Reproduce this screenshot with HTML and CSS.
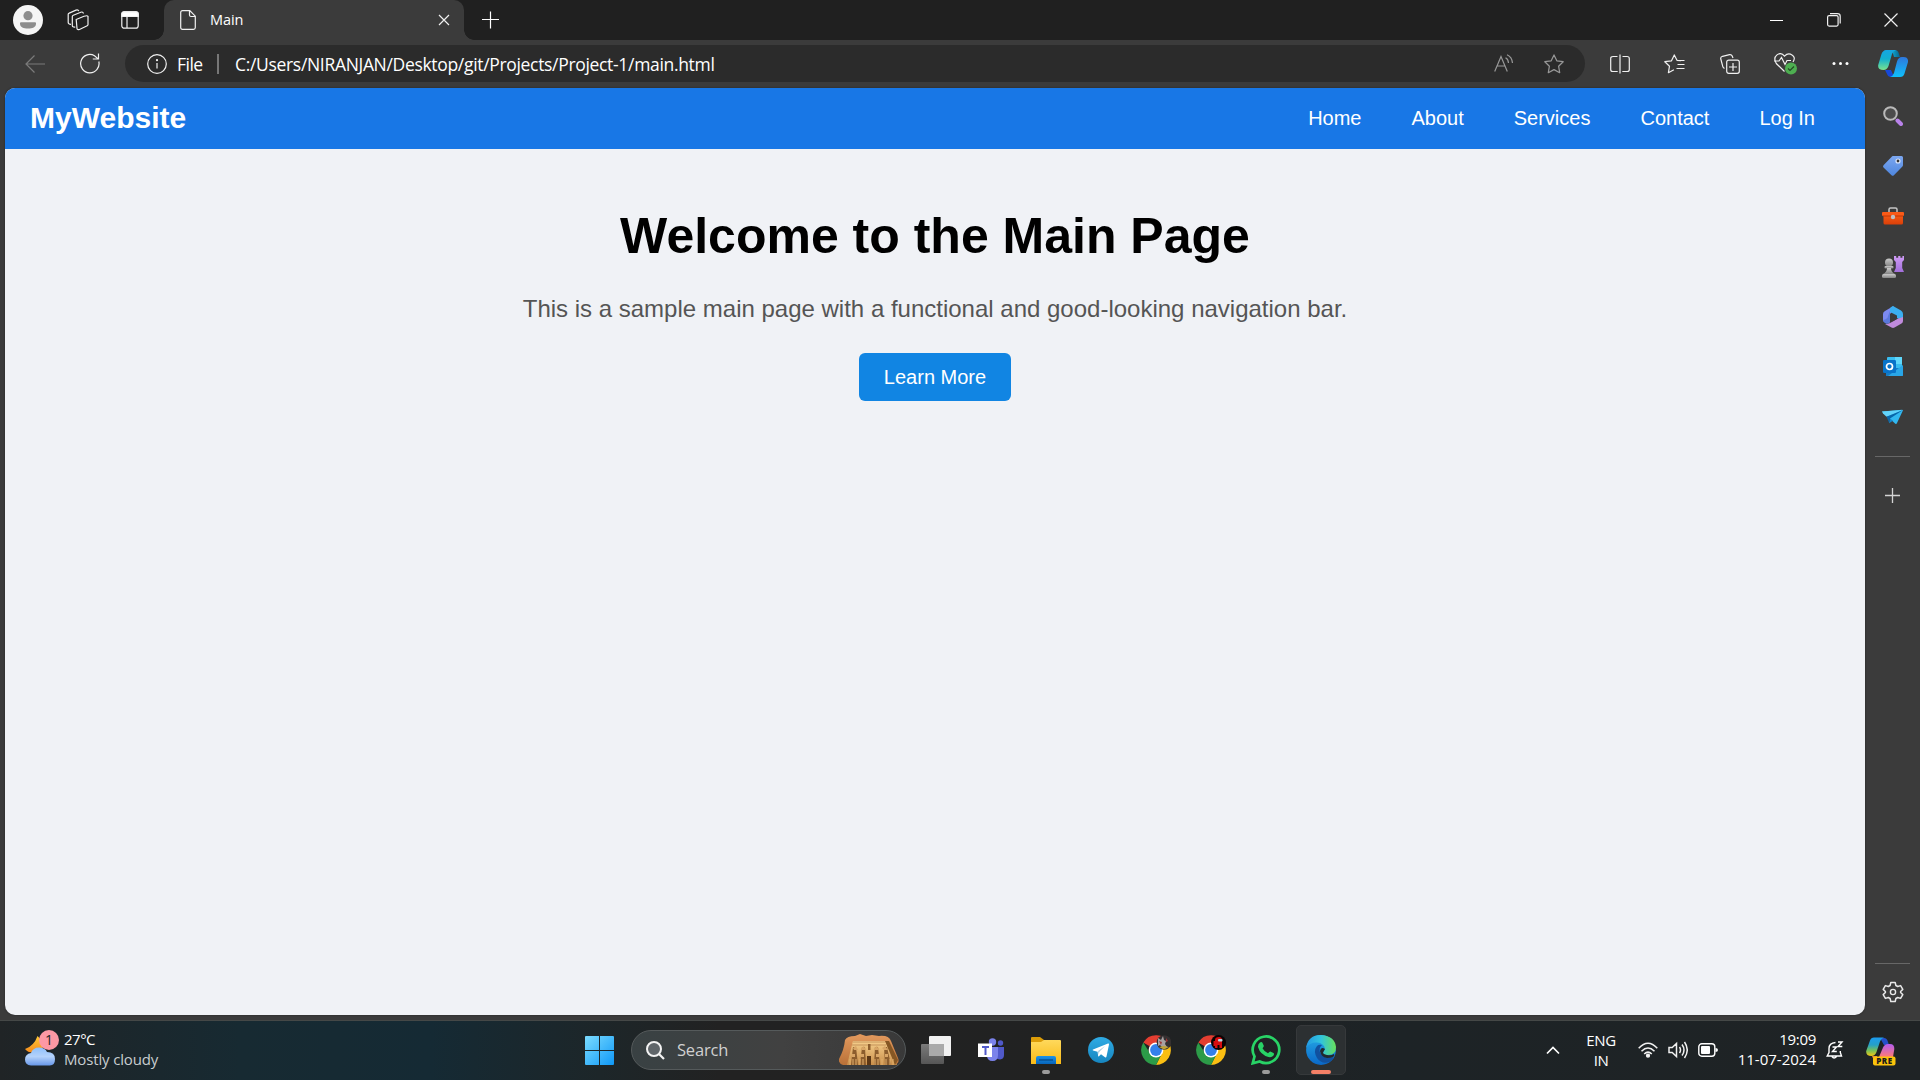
FILE: index.html
```html
<!DOCTYPE html>
<html lang="en">
<head>
<meta charset="utf-8">
<title>Main</title>
<link rel="stylesheet" href="styles.css">
</head>
<body>
<svg class="defs" aria-hidden="true">
  <defs>
    <linearGradient id="gCyan" x1="0" y1="0" x2="0" y2="1"><stop offset="0" stop-color="#16a5e2"/><stop offset=".45" stop-color="#12b0cf"/><stop offset="1" stop-color="#7be48c"/></linearGradient>
    <linearGradient id="gBlue" x1="0" y1="0" x2="0" y2="1"><stop offset="0" stop-color="#2e77dc"/><stop offset="1" stop-color="#0fc0fb"/></linearGradient>
    <linearGradient id="gTeal" x1="0" y1="0" x2="1" y2="0"><stop offset="0" stop-color="#0fa5cd"/><stop offset="1" stop-color="#07648f"/></linearGradient>
    <linearGradient id="gRain" x1="0" y1="0" x2="0" y2="1"><stop offset="0" stop-color="#1b9cf0"/><stop offset=".4" stop-color="#26a0c8"/><stop offset=".7" stop-color="#74c05a"/><stop offset="1" stop-color="#f2c811"/></linearGradient>
    <linearGradient id="gPink" x1="0" y1="0" x2="0" y2="1"><stop offset="0" stop-color="#b35cf0"/><stop offset="1" stop-color="#ff7a75"/></linearGradient>
    <linearGradient id="gTag" x1="0" y1="0" x2="0" y2="1"><stop offset="0" stop-color="#7ca7f0"/><stop offset="1" stop-color="#4e86de"/></linearGradient>
    <linearGradient id="gGrey" x1="0" y1="0" x2="0" y2="1"><stop offset="0" stop-color="#c9c9c9"/><stop offset="1" stop-color="#848484"/></linearGradient>
    <linearGradient id="gPurple" x1="0" y1="0" x2="0" y2="1"><stop offset="0" stop-color="#cf9bf5"/><stop offset="1" stop-color="#a26fdb"/></linearGradient>
    <linearGradient id="gBox" x1="0" y1="0" x2="0" y2="1"><stop offset="0" stop-color="#f9641c"/><stop offset="1" stop-color="#db3f08"/></linearGradient>
    <linearGradient id="gWin" x1="0" y1="0" x2="1" y2="1"><stop offset="0" stop-color="#7bdcff"/><stop offset="1" stop-color="#0f98f7"/></linearGradient>
    <linearGradient id="gFolder" x1="0" y1="0" x2="0" y2="1"><stop offset="0" stop-color="#ffd95c"/><stop offset="1" stop-color="#f9ba16"/></linearGradient>
    <linearGradient id="gCloud" x1="0" y1="0" x2="0" y2="1"><stop offset="0" stop-color="#8fc0fb"/><stop offset=".5" stop-color="#b4d2fb"/><stop offset="1" stop-color="#6797e8"/></linearGradient>
    <linearGradient id="gMoon" x1="0" y1="0" x2="0" y2="1"><stop offset="0" stop-color="#ffca36"/><stop offset="1" stop-color="#f48a1c"/></linearGradient>
    <linearGradient id="gTele" x1="0" y1="0" x2="0" y2="1"><stop offset="0" stop-color="#2fabe4"/><stop offset="1" stop-color="#1786c0"/></linearGradient>
    <linearGradient id="gEdge" x1="0" y1="0" x2="1" y2="0"><stop offset="0" stop-color="#2398e4"/><stop offset=".5" stop-color="#31c4dc"/><stop offset="1" stop-color="#68e05a"/></linearGradient>
    <linearGradient id="gEdge2" x1="0" y1="0" x2="0" y2="1"><stop offset="0" stop-color="#26a9e6"/><stop offset="1" stop-color="#0a68c8"/></linearGradient>
    <linearGradient id="gSand" x1="0" y1="0" x2="0" y2="1"><stop offset="0" stop-color="#e39a5e"/><stop offset="1" stop-color="#b97138"/></linearGradient>
    <linearGradient id="gFace" x1="0" y1="0" x2="0" y2="1"><stop offset="0" stop-color="#f6cf8c"/><stop offset="1" stop-color="#c98f4b"/></linearGradient>
    <linearGradient id="gBar" x1="0" y1="0" x2="0" y2="1"><stop offset="0" stop-color="#1d93e8"/><stop offset="1" stop-color="#0664ba"/></linearGradient>
    <linearGradient id="gView" x1="0" y1="0" x2="0" y2="1"><stop offset="0" stop-color="#7b7b7b"/><stop offset="1" stop-color="#565656"/></linearGradient>
    <symbol id="chrome" viewBox="0 0 30 30">
      <path d="M15 15 2.3 7.5A14.8 14.8 0 0 1 28.2 8.3H15z" fill="#e43e31"/>
      <path d="M15 8.3H28.2A14.8 14.8 0 0 1 15 29.9L21 18z" fill="#fbbf12"/>
      <path d="M2.3 7.5 9.2 18.5 21 18.3 15 29.9A14.8 14.8 0 0 1 2.3 7.5z" fill="#2c9b48"/>
      <circle cx="15" cy="15" r="7.4" fill="#fff"/><circle cx="15" cy="15" r="5.9" fill="#3480ea"/>
    </symbol>
  </defs>
</svg>

<header class="titlebar">
  <div class="title-tools">
    <svg width="30" height="30" viewBox="0 0 30 30"><circle cx="15" cy="15" r="15" fill="#f5f5f5"/><circle cx="15" cy="10.700" r="4.600" fill="#8d8d8d"/><path d="M8 17.300h14a1 1 0 0 1 1 1v.5c0 3.500-3.500 4.800-8 4.800s-8-1.300-8-4.800v-.5a1 1 0 0 1 1-1z" fill="#8d8d8d"/></svg>
    <svg class="workspaces-icon line" width="22" height="22" viewBox="0 0 22 22"><path d="M9.200 10.500 17 7.300q3.300-1 4 0v8.300q0 .8-.8 1.200l-7.700 3.700q-2.300.6-2.500-1z"/><path d="M8.300 18q-3 .4-3-1.500V7.500q0-.8 1-1.200l7.500-3.100q2.200-.7 2.700 1.300"/><path d="M4 15.300q-2.800 0-2.800-1.800V5.300q0-.8 1-1.200L9 1.100q2.200-.7 2.800 1"/></svg>
    <svg width="18" height="18" viewBox="0 0 18 18" class="line"><rect x=".8" y=".8" width="16.400" height="16.400" rx="2.500"/><path d="M6 5v12"/><path d="M.8 5.500V3q0-2.200 2.200-2.200h12Q17.200.8 17.200 3v2.500z" fill="#fff"/></svg>
  </div>
  <div class="tab">
    <svg width="16" height="20" viewBox="0 0 16 20" class="line"><path d="M2.500.7h7.300l5.500 5.500v11.300q0 1.800-1.800 1.800h-11Q.7 19.300.7 17.500v-15Q.7.700 2.500.700zM9.500.8V5q0 1.500 1.500 1.500h4.200"/></svg>
    <span class="tab-name">Main</span>
    <svg width="12" height="12" viewBox="0 0 12 12" class="line"><path d="M1 1l10 10M11 1 1 11"/></svg>
  </div>
  <svg class="new-tab" width="18" height="18" viewBox="0 0 18 18"><path d="M8.500 .5v17M0 8.500h17" stroke="#fff" stroke-width="1.200"/></svg>
  <div class="window-controls">
    <svg width="14" height="14" viewBox="0 0 14 14"><path d="M0 7.500h13" stroke="#fff"/></svg>
    <svg width="14" height="14" viewBox="0 0 14 14" class="line"><rect x=".6" y="2.600" width="10.500" height="10.500" rx="1.500"/><path d="M3 .6h7.500q2.700 0 2.700 2.700V10.500"/></svg>
    <svg width="14" height="14" viewBox="0 0 14 14" class="line"><path d="M.5.5l13 13M13.500.5l-13 13"/></svg>
  </div>
</header>

<div class="toolbar">
  <div class="nav-tools">
    <svg width="20" height="18" viewBox="0 0 20 18" class="line dim"><path d="M9.500.5 1 9l8.500 8.500M1 9h19"/></svg>
    <svg width="20" height="21" viewBox="0 0 20 21" class="line"><path d="M18.800 8.500A9.200 9.200 0 1 1 14.500 2.700l3.700 3.200M18.500.5V6h-5.700"/></svg>
  </div>
  <div class="address">
    <svg width="20" height="20" viewBox="0 0 20 20" class="line"><circle cx="10" cy="10" r="9.300"/><path d="M10 9v5.500"/><circle cx="10" cy="6.200" r=".5" fill="#fff"/></svg>
    <span class="scheme">File</span>
    <span class="divider"></span>
    <span class="url">C:/Users/NIRANJAN/Desktop/git/Projects/Project-1/main.html</span>
    <div class="address-tools">
      <svg width="20" height="19" viewBox="0 0 20 19" class="line dim2"><path d="M.7 17.500 7 2.500l6.300 15M3.200 12h7.700M11.500 3.800Q14.200 5 14.500 9M13 .8Q18 3 18.500 9" /></svg>
      <svg width="20" height="20" viewBox="0 0 20 20" class="line dim2"><path d="M10 .9l2.800 5.900 6.400.9-4.600 4.500 1.100 6.500L10 15.600l-5.700 3.100 1.100-6.500L.8 7.700l6.400-.9z" stroke-linejoin="round"/></svg>
    </div>
  </div>
  <div class="tool-icons">
    <svg width="20" height="20" viewBox="0 0 20 20" class="line"><path d="M7.500 2.500H3Q.7 2.500.7 4.500v11q0 2 2 2h5M12.500 2.500H17q2.300 0 2.300 2v11q0 2-2 2h-5M10 .5v19"/></svg>
    <svg width="21" height="20" viewBox="0 0 21 20" class="line"><path d="M17 6.700 13 6.300 10.300.9 7.500 6.800l-6.700.9 4.700 4.500-1.100 6.500 5.500-3M13.500 10.500h7M13.500 6.500h7M12.500 14.500h8" stroke-linejoin="round"/></svg>
    <svg width="20" height="20" viewBox="0 0 20 20" class="line"><rect x="6.700" y="6.200" width="12.600" height="13.100" rx="2"/><path d="M13 9v8M9 13h8M4.500 14.300Q3 14 2.800 12.500L.8 5Q.3 3 2.500 2.300l7-1.600q2-.3 2.700 1.300l.8 2"/></svg>
    <svg width="23" height="22" viewBox="0 0 23 22" class="line"><path d="M10.500 18.500 2.300 10.500Q-1 5 3 1.900T10.500 3.200Q14-.5 18 1.900T19 9M0 8h5l2.500-3.500 3.500 7 2-4h4"/><circle cx="17" cy="15.500" r="6" fill="#4eaf51" stroke="none"/><path d="M14 15.500l2 2 4-4" stroke="#234b24"/></svg>
    <svg width="17" height="5" viewBox="0 0 17 5"><g fill="#fff"><circle cx="2" cy="2.500" r="1.500"/><circle cx="8.500" cy="2.500" r="1.500"/><circle cx="15" cy="2.500" r="1.500"/></g></svg>
  </div>
  <svg class="copilot" width="30" height="27" viewBox="0 0 30 27"><path d="M14 0h3q3 0 4 4l1 3h-6z" fill="url(#gTeal)"/><path d="M7 20h6l3 7h-3q-3 0-4-3z" fill="#1748d8"/><path d="M8 0h10q-3 1-4 4l-3.500 12q-1.500 4-5 4Q-.5 20 .2 15L3.500 4Q5 .3 8 0z" fill="url(#gCyan)"/><path d="M22 27H12q3-1 4-4l3-11.500q1.300-4.500 5-4.500h1.500Q30.500 7 30 12l-3.500 11.500q-1 3.500-4.500 3.500z" fill="url(#gBlue)"/></svg>
</div>

<div class="workspace">
  <main class="page">
    <nav class="site-nav">
      <a class="brand">MyWebsite</a>
      <ul class="links"><li>Home</li><li>About</li><li>Services</li><li>Contact</li><li>Log In</li></ul>
    </nav>
    <section class="hero">
      <h1>Welcome to the Main Page</h1>
      <p>This is a sample main page with a functional and good-looking navigation bar.</p>
      <a class="cta">Learn More</a>
    </section>
  </main>
  <aside class="sidebar">
    <div class="side-apps">
      <svg width="20" height="20" viewBox="0 0 20 20"><circle cx="7.500" cy="7.500" r="6.300" fill="#4b4b4b" stroke="#b9b9b9" stroke-width="2"/><path d="M14.500 14.500l3.500 3.500" stroke="#b982ea" stroke-width="4" stroke-linecap="round"/></svg>
      <svg width="22" height="22" viewBox="0 0 22 22"><path d="M11 1h8.500Q21 1 21 2.500V10q0 1-.8 1.800l-8.300 8.500q-1.200 1-2.400 0l-8-7.700q-1-1.200 0-2.300l8-8.300Q10 1 11 1z" fill="url(#gTag)"/><circle cx="16" cy="6" r="2" fill="#353535" stroke="#dce7fb" stroke-width="1.200"/></svg>
      <svg width="22" height="18" viewBox="0 0 22 18"><path d="M7 5V2.500Q7 1 8.500 1h5Q15 1 15 2.500V5" fill="none" stroke="#c5c5c5" stroke-width="1.500"/><rect x="1.500" y="5" width="19.500" height="12.500" rx="1.500" fill="url(#gBox)"/><rect x="0" y="5" width="22" height="4" rx="1" fill="#fa5a17"/><path d="M1 9h20" stroke="#bf3607"/><circle cx="11" cy="10" r="2.200" fill="#bfc0c3"/></svg>
      <svg width="22" height="22" viewBox="0 0 22 22"><path d="M12 0h2.200v1.700h2V0h2.200v1.700h2V0H22v4l-1.800 2v6l1.800 4H12l1.800-4V6L12 4z" fill="url(#gPurple)"/><g fill="url(#gGrey)"><circle cx="7" cy="6.500" r="4"/><rect x="2.500" y="10" width="9" height="2.500" rx="1"/><path d="M5 12h4q0 4 4 6H1q4-2 4-6z"/><rect y="18" width="14" height="4" rx="1.500"/></g></svg>
      <svg width="20" height="22" viewBox="0 0 20 22"><path d="M10.500 0 2 5Q0 6 0 8v7l6.500 3V8.500L9 6z" fill="#7c8af0"/><path d="M10 0l8 4.500q2 1 2 3.500v7l-6-3V9.500L7 6V3q0-2 3-3z" fill="#3baff0"/><path d="M20 11v4q0 1.500-1.500 2.500l-7 4q-1.500.8-3 0L2 18q4 0 6-1.500l6-3.500z" fill="#c08bdc"/><path d="M7 5v11l-3 2-2-1q-2-1-2-3 5-1 5-4z" fill="#5a78dc"/><path d="M8 7.500l6 3V13l-4.500 2.500L8 14z" fill="#3b3b3b"/></svg>
      <svg width="20" height="20" viewBox="0 0 20 20"><rect x="4" width="15" height="14" rx="1" fill="#39bdf0"/><path d="M12 0h7v7h-7z" fill="#5fd7fb"/><path d="M3 19V11h17v8z" fill="#167cc5"/><path d="M5 19 20 8v10q0 1-1 1z" fill="#29a6e7"/><rect y="3" width="13" height="13" rx="1.300" fill="#0873c9"/><circle cx="6.500" cy="9.500" r="3" fill="none" stroke="#fff" stroke-width="1.700"/></svg>
      <svg width="21" height="16" viewBox="0 0 21 16"><path d="M0 2.500 20 .8q1.200 0 .8 1L15 14q-.5 1.300-1.700.8z" fill="#32b7ef"/><path d="M0 2.500 21 1 4.500 7.700 1 4.500z" fill="#62d3fa"/><path d="M4.500 7.700 21 1 8 9.500 7 13.500z" fill="#0865a9"/><path d="M8 9.500l3 2.300-4 2.500z" fill="#1687ce"/></svg>
    </div>
    <hr class="side-rule">
    <svg class="side-add" width="15" height="15" viewBox="0 0 15 15"><path d="M7.500 0v15M0 7.500h15" stroke="#d4d4d4" stroke-width="1.300"/></svg>
    <hr class="side-rule bottom">
    <svg class="gear" width="22" height="22" viewBox="0 0 22 22"><path d="M8.800 1.500h4.400l.7 3 1.800 1 2.900-.9 2.200 3.800L18.600 10.500v1l2.200 2.100-2.200 3.800-2.900-.9-1.800 1-.7 3H8.800l-.7-3-1.800-1-2.900.9-2.200-3.800 2.200-2.100v-1L1.200 8.400l2.200-3.800 2.900.9 1.800-1z" fill="none" stroke="#e8e8e8" stroke-width="1.500" stroke-linejoin="round"/><circle cx="11" cy="11" r="2.600" fill="none" stroke="#e8e8e8" stroke-width="1.400"/></svg>
  </aside>
</div>

<footer class="taskbar">
  <div class="weather">
    <svg width="34" height="36" viewBox="0 0 34 36"><path d="M12.500 6Q9 16 0 19q4 5 11 3 8-2 8-9z" fill="url(#gMoon)"/><path d="M6 35.500Q0 35 0 29.500T6 23Q8 17.500 14 17.500T22 22q8 0 8 7t-6 6.500z" fill="url(#gCloud)"/><circle cx="24" cy="10" r="10" fill="#fd98a4"/><text x="24" y="15" text-anchor="middle" class="badge-text">1</text></svg>
    <div class="weather-text"><span class="temp">27°C</span><span class="sky">Mostly cloudy</span></div>
  </div>
  <svg class="start" width="29" height="29" viewBox="0 0 29 29"><path d="M1 0h13v14H0V1q0-1 1-1zM15 0h13q1 0 1 1v13H15zM0 15h14v14H1q-1 0-1-1zM15 15h14v13q0 1-1 1H15z" fill="url(#gWin)"/></svg>
  <div class="search">
    <svg width="19" height="19" viewBox="0 0 19 19"><circle cx="8" cy="8" r="7" fill="#60666a" stroke="#f3f3f3" stroke-width="2"/><path d="M13 13l5 5" stroke="#f3f3f3" stroke-width="2.200"/></svg>
    <span class="search-label">Search</span>
    <svg class="temple" width="60" height="32" viewBox="0 0 60 32"><path d="M6 6Q8 2 16 2l5-2 6 2 6-1 7 1q10-1 12 5l7 17q2 5-3 7H4q-5-2-4-6 5-9 6-19z" fill="url(#gSand)"/><path d="M14 7h32l12 24H8z" fill="url(#gFace)"/><path d="M46 7h4l9 19-3 5z" fill="#855724"/><path d="M14 8h32M13 11h34" stroke="#c4935a"/><g fill="#8c5d2d"><path d="M14 13h3l2 18h-7z"/><path d="M23 13h3l1 18h-6z"/><path d="M36 13h3l2 18h-6z"/><path d="M45 13h3l4 18h-6z"/><path d="M28 22h4v9h-4z" fill="#5c3715"/><path d="M29 10h2.500v6H29z"/></g><g fill="#d8a566"><path d="M14 14l3-2 2 4h-4zM22 14l3-2 2 4h-4zM35 14l3-2 2 4h-4zM43 14l3-2 3 4h-4zM13 20h3v3h-3zM22 20h3v3h-3zM37 20h3v3h-3zM46 20h3v3h-3z"/></g><path d="M11 25v6M14 25v6M17 25v6M21 25v6M24 25v6M36 25v6M39 25v6M43 25v6M47 25v6M51 25v6M54 25v6" stroke="#e3b16e"/></svg>
  </div>
  <div class="apps">
    <div class="app"><svg width="30" height="30" viewBox="0 0 30 30"><rect x="0" y="9" width="23" height="20" rx="1" fill="url(#gView)"/><rect x="8" y="1" width="22" height="20" rx="1" fill="#f1f1f1"/><path d="M8 9h15v12H8z" fill="#aaa"/></svg></div>
    <div class="app"><svg width="26" height="24" viewBox="0 0 26 24"><circle cx="14.500" cy="4" r="3.700" fill="#7b83eb"/><circle cx="22.500" cy="5" r="2.700" fill="#5059c9"/><path d="M18 9h8v8q0 4-4 4.500-3 0-4-2z" fill="#5059c9"/><path d="M9 9h11v8q0 6-5.500 6T9 17z" fill="#7b83eb"/><path d="M0 5.500h14V19H0z" fill="#fff"/><path d="M4 9h7M7.500 9v8" stroke="#5059c9" stroke-width="2"/></svg></div>
    <div class="app running"><svg width="30" height="27" viewBox="0 0 30 27"><path d="M1 0h8l4 3v6H0V1q0-1 1-1z" fill="#dc9d08"/><path d="M0 5h10l3-2h16q1 0 1 1v23H0z" fill="url(#gFolder)"/><path d="M7 19h16q2 0 2 2v6H5v-6q0-2 2-2z" fill="url(#gBar)"/><path d="M8 23h14" stroke="#064b8c" stroke-width="1.300"/></svg></div>
    <div class="app"><svg width="26" height="26" viewBox="0 0 26 26"><circle cx="13" cy="13" r="13" fill="url(#gTele)"/><path d="M5 12.500 20 6.600q1.200-.3 1 1l-2.500 12q-.4 1.300-1.500.6l-4-3-2 2q-.8.600-.9-.5l-.5-4L5 13.500q-.8-.5 0-1z" fill="#fff"/><path d="M10 14l7-5-5.800 6-.5 3z" fill="#a9cde1"/></svg></div>
    <div class="app"><svg width="30" height="30" viewBox="0 0 30 30"><use href="#chrome"/><circle cx="23" cy="7.500" r="7.300" fill="#343031"/><path d="M17 3l3 2 2-4 1 4 2 1-1 3 2 3-4 1-3-3-2 1z" fill="#a7a1a2"/><path d="M18 6l3 1-1 3zM25 3l2 3-2 1z" fill="#a33433"/><path d="M18 12l5-1 5 1-5 2.500z" fill="#c1a336"/></svg></div>
    <div class="app"><svg width="30" height="30" viewBox="0 0 30 30"><use href="#chrome"/><circle cx="22.500" cy="7.500" r="7.500" fill="#0a0303"/><path d="M19 13V5q0-3 4-3 3 0 3 3v8h-2.500v-3h-2v3zM17.500 6H19v5h-1.500z" fill="#d60d10"/><rect x="22" y="4" width="4.500" height="2.500" rx="1" fill="#b8d7e4"/></svg></div>
    <div class="app running"><svg width="30" height="30" viewBox="0 0 30 30"><path d="M1.700 28.300 3.500 21.500A13.300 13.300 0 1 1 8.700 26.500z" fill="none" stroke="#28d366" stroke-width="2.700"/><path d="M9 7.500q1.300-.8 2.300 0l1.500 3.300q.2.800-1.300 2.400 2 3.800 5.500 5 1.500-1.800 2.300-1.800l3.200 1.600q1 .7 0 2.500-1.700 2.300-5 1.600-8.300-2.300-10.500-10Q6.800 9.300 9 7.500z" fill="#28d366"/></svg></div>
    <div class="app active"><svg width="30" height="30" viewBox="0 0 30 30"><circle cx="15" cy="15" r="14.900" fill="url(#gEdge2)"/><path d="M0 13Q2 0 15 0q14 1 15 12 0 8-8 8-5 0-5-2l2-4q-1-6-8-6.500Q4 7 0 13z" fill="url(#gEdge)"/><path d="M11 11q-4 5 0 12 5 7 13 3.800l3-2.600Q29 22 26 22.300 18 24 14.300 18q-2-5 1.700-8-3-1-5 1z" fill="#11519f"/><path d="M19 14q-4-3-5 2 1 6 7 7 4 0 6-1 2-1 1-3-3 2-7 1-4-1-4-2.500z" fill="#22292c"/></svg></div>
  </div>
  <div class="tray">
    <svg class="chevron" width="14" height="9" viewBox="0 0 14 9"><path d="M1 7.500l6-6 6 6" fill="none" stroke="#fff" stroke-width="1.700"/></svg>
    <div class="lang"><span>ENG</span><span>IN</span></div>
    <div class="status">
      <svg width="20" height="16" viewBox="0 0 20 16" class="line bold"><path d="M.7 6.200Q10-3.700 19.300 6.200M3.500 9.200q6.500-6.500 13 0M6.200 12q3.800-3.700 7.600 0"/><circle cx="10" cy="13.700" r="1.400" fill="#fff"/></svg>
      <svg width="20" height="18" viewBox="0 0 20 18" class="line bold"><path d="M1 6.500h3.200L8.500 2.500v13L4.200 11.500H1zM11.500 6q2 3 0 6M14 3.500q4 5.500 0 11M16.500 1q5.500 8 0 16"/></svg>
      <svg width="20" height="14" viewBox="0 0 20 14"><rect x=".8" y=".8" width="16" height="12.400" rx="3" fill="none" stroke="#fff" stroke-width="1.400"/><rect x="3" y="3" width="9" height="8" rx="1" fill="#fff"/><path d="M17.500 5q2.500 0 2.500 2t-2.500 2z" fill="#fff"/></svg>
    </div>
    <div class="clock"><span>19:09</span><span class="date">11-07-2024</span></div>
    <svg class="bell" width="18" height="18" viewBox="0 0 18 18"><path d="M9.500 1.500Q3 2 3 7.500v4L1.200 15H15.500l-1.200-3.500V10M6 15.500q2 3 4.500 0" fill="none" stroke="#fff" stroke-width="1.400"/><path d="M6.500 6h4l-4 4.500h4.300M12 1h4l-4 4.500h4.300" fill="none" stroke="#fff" stroke-width="1.400"/></svg>
    <svg class="copilot-pre" width="30" height="29" viewBox="0 0 30 29"><path d="M14 1h4q3 0 4 4l1 3h-5z" fill="#254fc9"/><path d="M8 .5h10q-3 1-4 4L10.500 15q-1.500 4-5 4Q-.3 19 .2 14L4 3.500Q5 .5 8 .5z" fill="url(#gRain)"/><path d="M13 20l4-9.500Q18.500 7 22 7h2q4.500 0 4.300 5L27 20z" fill="url(#gPink)"/><path d="M6 19h5v5Q7 23 6 19z" fill="#ed8f36"/><rect x="7" y="19.500" width="22.500" height="9" rx="2" fill="#fcc30b"/><text x="18.200" y="27" text-anchor="middle" textLength="16" class="pre-text">PRE</text></svg>
  </div>
</footer>
</body>
</html>
```
FILE: styles.css
```css
* { box-sizing: border-box; }

body {
  margin: 0;
  width: 1920px;
  height: 1080px;
  overflow: hidden;
  display: grid;
  grid-template-rows: 40px 48px 933px 59px;
  background: #3b3b3b;
  color: #fff;
  font-family: "Open Sans", "Noto Sans", sans-serif;
}

svg { display: block; flex: none; }
.defs { position: absolute; width: 0; height: 0; }
.line { fill: none; stroke: #f0f0f0; stroke-width: 1.2; }
.line.bold { stroke-width: 1.5; }
.line.dim { stroke: #7b7b7b; }
.line.dim2 { stroke: #989898; }

/* Tab strip */
.titlebar { display: flex; background: #202020; }
.title-tools { width: 164px; display: flex; align-items: center; gap: 32px; padding-left: 13px; }
.workspaces-icon { margin-left: -8px; }
.tab {
  position: relative;
  width: 300px;
  display: flex;
  align-items: center;
  padding: 0 14px 0 16px;
  background: #3b3b3b;
  border-radius: 10px 10px 0 0;
}
.tab::before, .tab::after {
  content: "";
  position: absolute;
  bottom: 0;
  width: 10px;
  height: 10px;
}
.tab::before { left: -10px; background: radial-gradient(circle at 0 0, #202020 9.5px, #3b3b3b 10px); }
.tab::after { right: -10px; background: radial-gradient(circle at 100% 0, #202020 9.5px, #3b3b3b 10px); }
.tab-name { flex: 1; margin-left: 14px; font-size: 14.5px; line-height: 20px; letter-spacing: -.1px; }
.new-tab { margin: 11px 0 0 18px; }
.window-controls { margin: 0 22px 0 auto; display: flex; align-items: center; gap: 43px; }

/* Address bar */
.toolbar { display: flex; align-items: center; padding-bottom: 1px; }
.nav-tools { width: 125px; padding-left: 25px; display: flex; align-items: center; gap: 35px; }
.address {
  width: 1460px;
  height: 37px;
  display: flex;
  align-items: center;
  padding: 0 21px 0 22px;
  background: #2b2b2b;
  border-radius: 19px;
  font-size: 17.5px;
  line-height: 24px;
}
.scheme { width: 40px; margin-left: 10px; letter-spacing: -.5px; }
.divider { width: 2px; height: 20px; background: #777; }
.url { margin-left: 16px; white-space: nowrap; letter-spacing: -.32px; }
.address-tools { display: flex; align-items: center; gap: 30px; margin-left: auto; }
.tool-icons { display: grid; grid-template-columns: repeat(5, 55.3px); margin-left: 7px; align-items: center; justify-items: center; }
.copilot { margin-left: 10px; }

/* Viewport and sidebar */
.workspace { display: grid; grid-template-columns: 1860px 55px; padding: 0 0 5px 5px; border-bottom: 1px solid #454847; }
.page {
  overflow: hidden;
  background: #f0f2f6;
  border-radius: 10px;
  color: #000;
  font-family: "Liberation Sans", Arial, sans-serif;
  box-shadow: 0 0 2px #222;
}
.site-nav { height: 61px; display: flex; align-items: center; justify-content: space-between; padding: 0 50px 0 25px; background: #1877e6; color: #fff; }
.brand { padding-bottom: 2px; font-size: 30px; font-weight: 700; line-height: 35px; }
.links { display: flex; gap: 50px; margin: 0; padding: 0; list-style: none; font-size: 20px; line-height: 23px; }
.hero { display: flex; flex-direction: column; align-items: center; padding-top: 58px; }
.hero h1 { margin: 0; font-size: 50px; line-height: 58px; }
.hero p { margin: 30px 0 0; color: #555; font-size: 24px; line-height: 28px; }
.cta { margin-top: 30px; width: 152px; height: 48px; border-radius: 6px; background: #1185e3; color: #fff; font-size: 20px; line-height: 48px; text-align: center; }
.sidebar { display: flex; flex-direction: column; align-items: center; }
.side-apps { display: grid; grid-auto-rows: 50.2px; margin-top: 3px; place-items: center; }
.side-rule { width: 35px; height: 1px; margin: 14px 0 0; border: 0; background: #676767; }
.side-add { margin-top: 31px; }
.side-rule.bottom { margin-top: auto; }
.gear { margin: 17px 0 12px; }

/* Taskbar */
.taskbar {
  display: flex;
  align-items: center;
  padding-bottom: 1px;
  background: linear-gradient(90deg, #202426 0, #172a32 240px, #152a34 430px, #1d2629 600px, #222 720px, #212222 1100px, #1d2326 1400px, #1f2325 1920px);
  font-size: 15px;
  line-height: 20px;
}
.weather { width: 585px; padding: 0 0 5px 25px; display: flex; align-items: center; gap: 5px; }
.weather-text { display: flex; flex-direction: column; padding-top: 2px; }
.temp { letter-spacing: -.5px; }
.sky { color: #c8cdd0; letter-spacing: -.15px; }
.badge-text { font-size: 14px; fill: #242424; }
.search {
  width: 275px;
  height: 40px;
  margin-left: 17px;
  padding: 0 6px 0 14px;
  display: flex;
  align-items: center;
  border: 1px solid #555a5b;
  border-radius: 20px;
  background: linear-gradient(90deg, #394143, #414141 55%, #393939);
}
.search-label { margin-left: 12px; color: #d0d0d0; font-size: 16.5px; letter-spacing: -.2px; }
.temple { margin-left: auto; }
.apps { display: grid; grid-template-columns: repeat(8, 55px); margin-left: 2px; }
.app { position: relative; width: 50px; height: 50px; margin: 0 auto; display: grid; place-items: center; }
.app.active { background: #2c3032; border: 1px solid #36393b; border-radius: 5px; }
.app.running::after, .app.active::after { content: ""; position: absolute; left: 21px; bottom: 1px; width: 8px; height: 4px; border-radius: 2px; background: #9b9b9b; }
.app.active::after { left: 14px; bottom: 0; width: 20px; background: #f48066; }
.tray { flex: 1; display: flex; align-items: center; padding-left: 198px; }
.lang { width: 46px; margin-left: 18px; padding-bottom: 1px; display: flex; flex-direction: column; align-items: center; letter-spacing: -.4px; }
.status { display: flex; align-items: center; gap: 10px; margin-left: 14px; }
.clock { width: 98px; display: flex; flex-direction: column; align-items: flex-end; padding-bottom: 2px; letter-spacing: -.3px; }
.date { letter-spacing: 0; }
.bell { margin-left: 10px; }
.copilot-pre { margin-left: 22px; margin-top: 3px; }
.pre-text { font: 800 8px "Open Sans", sans-serif; fill: #1b1b1b; }
```
